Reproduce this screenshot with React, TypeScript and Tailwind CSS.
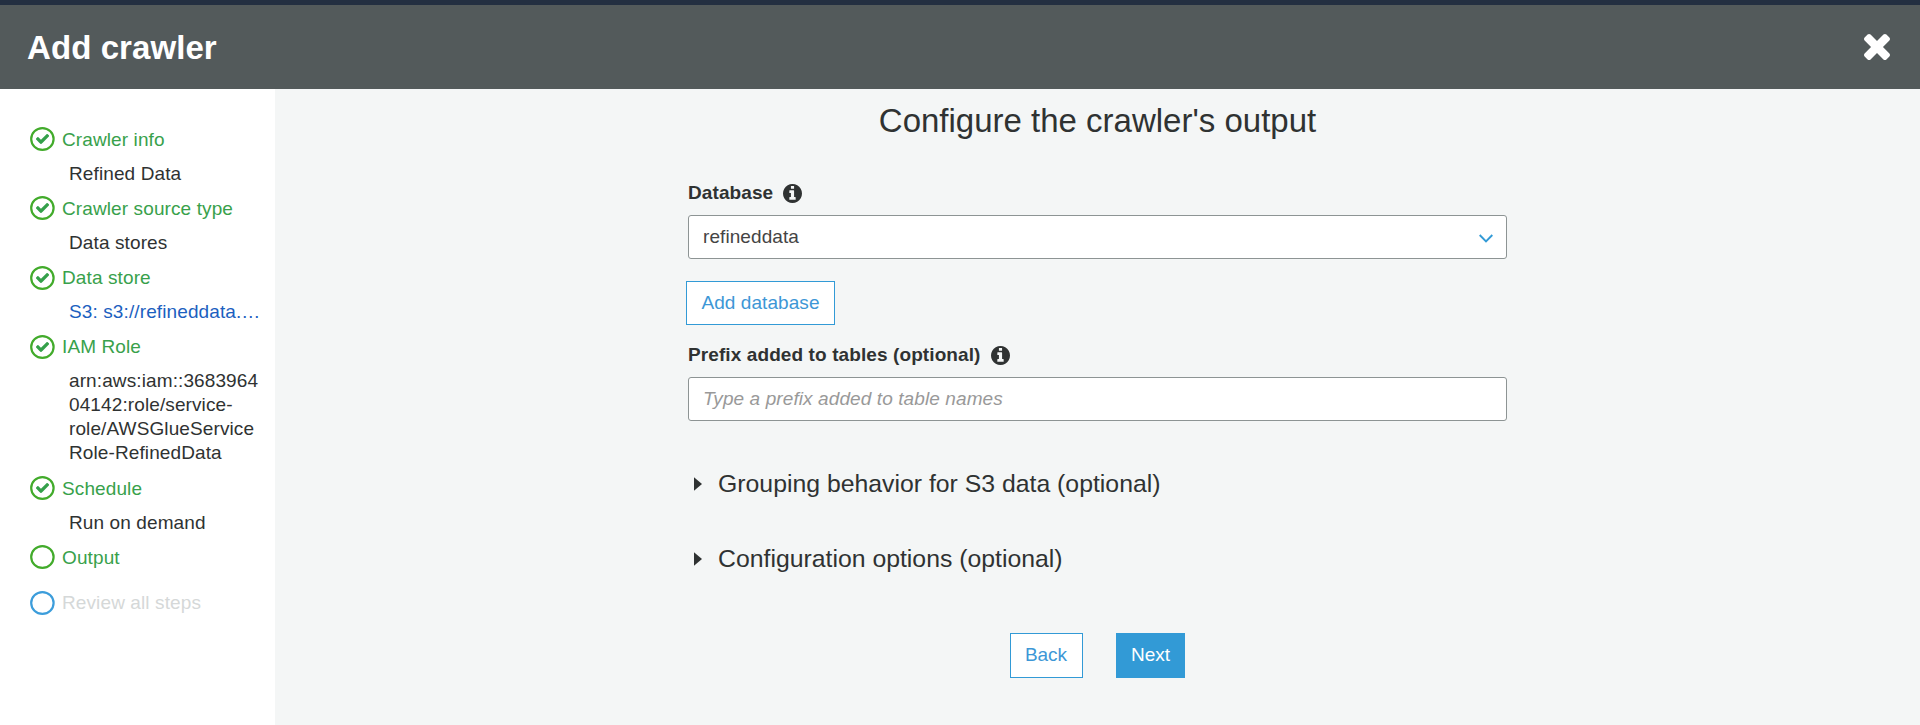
import React from "react";

type Step = {
  label: string;
  state: "done" | "current" | "pending";
  detail?: string[];
  link?: boolean;
  spacing: string;
  iconSpacing?: string;
};

const steps: Step[] = [
  { label: "Crawler info", state: "done", detail: ["Refined Data"], spacing: "mb-[11px]" },
  { label: "Crawler source type", state: "done", detail: ["Data stores"], spacing: "mb-[11px]" },
  { label: "Data store", state: "done", detail: ["S3: s3://refineddata.…"], link: true, spacing: "mb-[11px]", iconSpacing: "mt-[0.5px]" },
  {
    label: "IAM Role",
    state: "done",
    detail: ["arn:aws:iam::3683964", "04142:role/service-", "role/AWSGlueService", "Role-RefinedData"],
    spacing: "mb-3",
    iconSpacing: "mt-px",
  },
  { label: "Schedule", state: "done", detail: ["Run on demand"], spacing: "mb-[11px]" },
  { label: "Output", state: "current", spacing: "mb-[21px]" },
  { label: "Review all steps", state: "pending", spacing: "mb-0", iconSpacing: "mt-[0.5px]" },
];

function StepIcon({ state }: { state: Step["state"] }) {
  return (
    <svg className="h-6 w-[25px] shrink-0" viewBox="0 0 25 24" fill="none">
      <ellipse cx="12.4" cy="12" rx="11.2" ry="10.9" strokeWidth="2.2" stroke={state === "pending" ? "#3c9ddb" : "#42ab2b"} />
      {state === "done" && (
        <svg x="5.9" y="6.9" width="13.2" height="10.2" viewBox="121 334 1550 1188">
          <path
            fill="#34a04a"
            d="M1671 566q0 40-28 68l-724 724-136 136q-28 28-68 28t-68-28l-136-136-362-362q-28-28-28-68t28-68l136-136q28-28 68-28t68 28l294 295 656-657q28-28 68-28t68 28l136 136q28 28 28 68z"
          />
        </svg>
      )}
    </svg>
  );
}

function InfoIcon() {
  return (
    <svg className="mt-px h-[19px] w-[19px]" viewBox="128 128 1536 1536" fill="#2f3232">
      <path d="M1152 1376v-160q0-14-9-23t-23-9h-96v-512q0-14-9-23t-23-9h-320q-14 0-23 9t-9 23v160q0 14 9 23t23 9h96v320h-96q-14 0-23 9t-9 23v160q0 14 9 23t23 9h448q14 0 23-9t9-23zm-128-896v-160q0-14-9-23t-23-9h-192q-14 0-23 9t-9 23v160q0 14 9 23t23 9h192q14 0 23-9t9-23zm640 416q0 209-103 385.5t-279.5 279.5-385.5 103-385.5-103-279.5-279.5-103-385.5 103-385.5 279.5-279.5 385.5-103 385.5 103 279.5 279.5 103 385.5z" />
    </svg>
  );
}

function FieldLabel({ children }: { children: React.ReactNode }) {
  return (
    <div className="flex h-6 items-center gap-2.5 font-bold tracking-[0.1px]">
      <span>{children}</span>
      <InfoIcon />
    </div>
  );
}

function Expander({ children }: { children: React.ReactNode }) {
  return (
    <div className="flex h-8 items-center pl-1.5 text-[24.8px] leading-8">
      <svg className="mr-4 h-[14px] w-2" viewBox="0 0 8 14" fill="#2f3232">
        <path d="M0 0.3L8 7L0 13.7z" />
      </svg>
      <span className="whitespace-nowrap">{children}</span>
    </div>
  );
}

export default function App() {
  return (
    <div className="flex h-[725px] w-full flex-col overflow-hidden bg-[#f4f6f6] font-['Liberation_Sans',Arial,sans-serif] text-[19px] leading-6 text-[#2f3232]">
      <div className="h-[5px] shrink-0 bg-[#232f41]" />
      <header className="flex h-[84px] shrink-0 items-start justify-between bg-[#535a5b] pr-[30px] pl-[27px] text-white">
        <h1 className="mt-[23px] text-[33px] leading-10 font-bold tracking-[0.08px]">Add crawler</h1>
        <button aria-label="Close" className="mt-[28.5px]">
          <svg className="h-[26px] w-[26px]" viewBox="110 366 1188 1188" fill="currentColor">
            <path d="M1298 1322q0 40-28 68l-136 136q-28 28-68 28t-68-28l-294-294l-294 294q-28 28-68 28t-68-28l-136-136q-28-28-28-68t28-68l294-294l-294-294q-28-28-28-68t28-68l136-136q28-28 68-28t68 28l294 294l294-294q28-28 68-28t68 28l136 136q28 28 28 68t-28 68l-294 294l294 294q28 28 28 68z" />
          </svg>
        </button>
      </header>
      <div className="flex min-h-0 flex-1">
        <nav className="flex w-[275px] shrink-0 flex-col bg-white pt-[38px] pl-[30px] tracking-[0.11px]">
          {steps.map((s) => (
            <div key={s.label} className={s.spacing}>
              <div className="flex h-6 items-start gap-[7px]">
                <div className={s.iconSpacing}>
                  <StepIcon state={s.state} />
                </div>
                <span className={`mt-px ${s.state === "pending" ? "text-[#d5d8d8]" : "text-[#38a14b]"}`}>{s.label}</span>
              </div>
              {s.detail && (
                <div className={`mt-[11px] -mb-px ml-[39px] whitespace-nowrap ${s.link ? "text-[#1c5fc0]" : ""}`}>
                  {s.detail.map((line) => (
                    <div key={line}>{line}</div>
                  ))}
                </div>
              )}
            </div>
          ))}
        </nav>
        <main className="flex flex-1 flex-col items-center pt-3">
          <h2 className="text-[33px] leading-10">Configure the crawler's output</h2>
          <div className="mt-10 flex w-[819px] flex-col">
            <FieldLabel>Database</FieldLabel>
            <div className="mt-2.5 flex h-11 items-center justify-between rounded-[3px] border border-[#8d9494] bg-white pr-[13px] pl-3.5 text-[#444]">
              <span className="tracking-[0.08px]">refineddata</span>
              <svg className="mt-0.5 h-[9px] w-[14px]" viewBox="0 0 14 9" fill="none" stroke="#329ad6" strokeWidth="1.9">
                <path d="M0.7 1L7 7.3L13.3 1" />
              </svg>
            </div>
            <button className="mt-[22px] -ml-0.5 flex h-11 w-[149px] items-center justify-center border border-[#329ad6] bg-white tracking-[0.08px] text-[#3d97d6]">
              Add database
            </button>
            <div className="mt-[18px]">
              <FieldLabel>Prefix added to tables (optional)</FieldLabel>
            </div>
            <input
              className="mt-2.5 h-11 rounded-[3px] border border-[#8d9494] bg-white px-3.5 tracking-[0.1px] placeholder:text-[#999] placeholder:italic"
              placeholder="Type a prefix added to table names"
            />
            <div className="mt-[47px] flex flex-col gap-[43px]">
              <Expander>Grouping behavior for S3 data (optional)</Expander>
              <Expander>Configuration options (optional)</Expander>
            </div>
          </div>
          <div className="mt-[58px] flex gap-[33px]">
            <button className="flex h-[45px] w-[73px] items-start justify-center border border-[#329ad6] bg-white pt-[9px] pr-px text-[#3d97d6]">
              Back
            </button>
            <button className="flex h-[45px] w-[69px] items-start justify-center bg-[#329ad6] pt-2.5 text-white">
              Next
            </button>
          </div>
        </main>
      </div>
    </div>
  );
}
